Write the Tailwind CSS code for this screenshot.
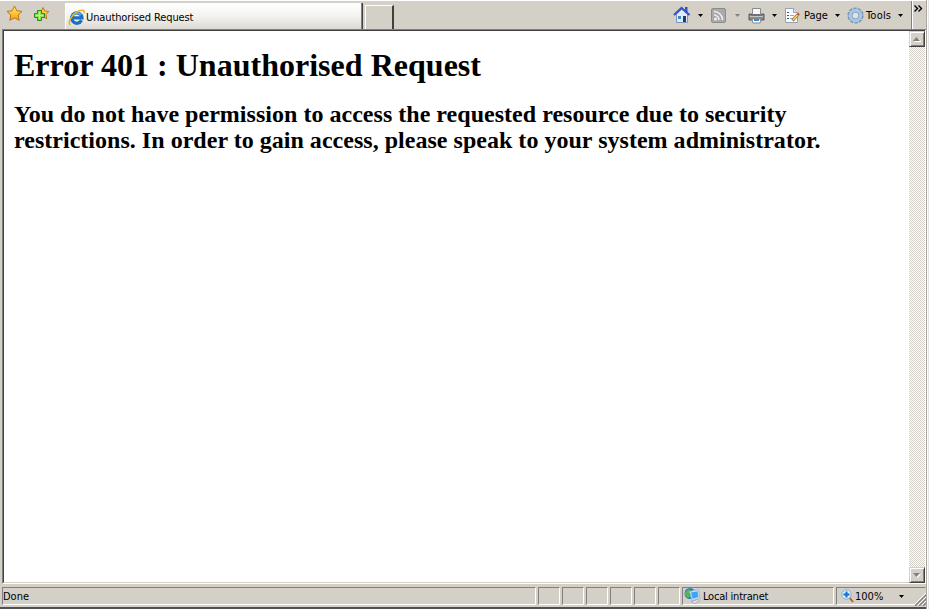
<!DOCTYPE html>
<html lang="en">
<head>
<meta charset="utf-8">
<title>Unauthorised Request</title>
<script src="https://cdn.jsdelivr.net/npm/@tailwindcss/browser@4"></script>
</head>
<body class="w-[929px] h-[609px] overflow-hidden bg-[#d4d0c8] text-black font-['DejaVu_Sans_Condensed','DejaVu_Sans',sans-serif] text-[11px] leading-[14px] flex">
<div class="w-[927px] h-[609px] flex flex-col border-r border-[#aaa69f]">
  <header class="h-[29px] border-t border-white flex items-start shrink-0">
    <svg class="ml-[6px] mt-[4px] shrink-0" width="17" height="17" viewBox="0 0 17 17"><defs><linearGradient id="g" x2="0" y2="1"><stop stop-color="#fff2a0"/><stop offset=".5" stop-color="#ffc633"/><stop offset="1" stop-color="#f49b20"/></linearGradient></defs><path d="M8.500 1 10.800 5.800 16 6.400 12.200 10 13.200 15.300 8.500 12.900 3.800 15.300 4.800 10 1 6.400 6.200 5.800Z" fill="url(#g)" stroke="#bd750f" stroke-linejoin="round"/></svg>
    <svg class="ml-[10px] mt-[5px] shrink-0" width="17" height="16" viewBox="0 0 17 16"><path d="M10 1.500 11.800 5 15.800 5.500 13 8.500 13.800 12.800 10 10.700 6.200 12.800 7 8.500 4 5.500 8.200 5Z" fill="#ffc83f" stroke="#c47b17" stroke-linejoin="round"/><path d="M4.500 4.500h4v3h3v4h-3v3h-4v-3h-3v-4h3Z" fill="#8de052" stroke="#278b1c"/><path d="M6.500 6v7M3 9.500h7" stroke="#c5f79a"/></svg>
    <div class="ml-[15px] mt-[2px] h-[26px] w-[296px] shrink-0 bg-linear-to-b from-white via-[#f3f2ef] to-[#dcd9d2] border-l border-t border-white flex items-center pl-[2px] pt-[2px]">
      <svg class="shrink-0 -mt-px" width="18" height="17" viewBox="0 0 18 17"><path d="M13.500 11.300A5.200 5.200 0 1 1 14 8.800H5" fill="none" stroke="#1b70c0" stroke-width="3.200"/><path d="M4.200 7.200A5 5 0 0 1 13 6" fill="none" stroke="#4cb7ee" stroke-width="1.600"/><path d="M2.600 15.800C-1 14.500 3 7 8 3.600 12.500.600 17.500 0 16 4.500" fill="none" stroke="#f2ad22" stroke-width="1.500"/></svg>
      <span class="whitespace-nowrap tracking-[-0.12px]">Unauthorised Request</span>
    </div>
    <div class="mt-[2px] h-[26px] w-[2px] bg-[#404040] border-l border-[#808080] shrink-0"></div>
    <div class="ml-[2px] mt-[4px] h-[24px] w-[29px] shrink-0 border-l border-t border-l-white border-t-white border-r-2 border-r-[#404040]"></div>
    <div class="ml-auto flex h-[28px] items-center shrink-0">
      <svg width="18" height="18" viewBox="0 0 18 18"><path d="M3.500 8v8.500h11V8L9 3Z" fill="#dfeafa" stroke="#7d96bd"/><path d="M12 1h2.500v5H12z" fill="#3655c5"/><path d="M1 9 8.500 2 16.500 9" fill="none" stroke="#3655c5" stroke-width="2.200"/><path d="M5 10h3v3H5z" fill="#4783ca"/><path d="M10 10h3v6h-3z" fill="#263b62"/></svg>
      <svg class="ml-[7px]" width="5" height="3"><path d="M0 0h5L2.500 3Z"/></svg>
      <svg class="ml-[8px]" width="15" height="15" viewBox="0 0 15 15"><rect x=".5" y=".5" width="14" height="14" rx="1.500" fill="#aaa" stroke="#8b8b8b"/><circle cx="4.500" cy="11" r="1.500" fill="#eee"/><path d="M3 7a5 5 0 0 1 5 5M3 3.500a8.500 8.500 0 0 1 8.500 8.500" fill="none" stroke="#eee" stroke-width="1.600"/></svg>
      <svg class="ml-[9px]" width="5" height="3"><path d="M0 0h5L2.500 3Z" fill="#808080"/></svg>
      <svg class="ml-[8px]" width="17" height="17" viewBox="0 0 17 17"><path d="M4.500 1.500h8v6h-8z" fill="#f7f7f7" stroke="#8b8b8b"/><path d="M1 7h2.500v1h10V7H16v6H1Z" fill="#888" stroke="#5b5b5b"/><path d="M2 9.500h13" stroke="#c5c5c5"/><path d="M4 12h9l-1 4H5Z" fill="#fff" stroke="#888"/><path d="M6 12h5v2H6z" fill="#368bd6"/></svg>
      <svg class="ml-[7px]" width="5" height="3"><path d="M0 0h5L2.500 3Z"/></svg>
      <svg class="ml-[7px]" width="17" height="17" viewBox="0 0 17 17"><path d="M1.500 1.500h8l4 4v10h-12z" fill="#f7fafe" stroke="#94a3b3"/><path d="M9.500 1.500v4h4" fill="#d8e3ee" stroke="#94a3b3"/><path d="M3 5.500h2M3 8.500h2M3 11.500h2" stroke="#555"/><path d="M6 8.500h4M6 11.500h3" stroke="#83b0da"/><path d="m8.500 13.500 5.500-6" stroke="#a66c23" stroke-width="3"/><path d="m9 13 4.500-5" stroke="#ffd354" stroke-width="1.500"/><path d="m14 7.500 1-1" stroke="#d34d46" stroke-width="2.500"/></svg>
      <span class="ml-[3px] mt-px w-[25px] whitespace-nowrap">Page</span>
      <svg class="ml-[6px]" width="5" height="3"><path d="M0 0h5L2.500 3Z"/></svg>
      <svg class="ml-[7px]" width="17" height="17" viewBox="0 0 17 17"><circle cx="8.500" cy="8.500" r="7.200" fill="none" stroke="#7593b7" stroke-width="1.800" stroke-dasharray="3.200 1.324"/><circle cx="8.500" cy="8.500" r="5" fill="none" stroke="#7f9fc4" stroke-width="4.200"/><circle cx="8.500" cy="8.500" r="5.200" fill="none" stroke="#a9c6e5" stroke-width="3"/><circle cx="8.500" cy="8.500" r="2.600" fill="#e4e3df"/></svg>
      <span class="ml-[2px] mt-px w-[27px] whitespace-nowrap tracking-[0.2px]">Tools</span>
      <svg class="ml-[5px]" width="5" height="3"><path d="M0 0h5L2.500 3Z"/></svg>
      <div class="ml-[8px] h-[28px] w-[15px] border-l border-[#808080] shadow-[inset_1px_0_#fff] pt-[4px] pl-[2px]"><svg width="9" height="7" viewBox="0 0 9 7"><path d="m.5.500 3 3-3 3M4.500.500l3 3-3 3" fill="none" stroke="#000" stroke-width="1.400"/></svg></div>
    </div>
  </header>
  <main class="h-[555px] shrink-0 ml-[2px] bg-white border-t border-l border-t-[#808080] border-l-[#808080] border-b border-b-white flex">
    <div class="w-[906px] border-t border-l border-[#404040] border-b border-b-[#d4d0c8] pl-[10px] font-['Liberation_Serif',serif] font-bold">
      <h1 class="mt-[16px] text-[32px] leading-[37px] whitespace-nowrap tracking-[0.02px]">Error 401 : Unauthorised Request</h1>
      <h2 class="mt-[17px] text-[24px] leading-[26px] whitespace-nowrap tracking-[0.025px]">You do not have permission to access the requested resource due to security<br>restrictions. In order to gain access, please speak to your system administrator.</h2>
    </div>
    <div class="w-[16px] h-[553px] border-t border-t-[#404040] flex flex-col justify-between bg-[repeating-conic-gradient(#fff_0_25%,#d4d0c8_0_50%)] bg-[length:2px_2px]">
      <div class="h-[16px] bg-[#d4d0c8] border border-[#d4d0c8] border-r-[#404040] border-b-[#404040] shadow-[inset_1px_1px_#fff,inset_-1px_-1px_#808080] flex items-center justify-center"><svg width="8" height="5"><path d="M1 5h7v-1L4.500 1Z" fill="#fff"/><path d="M0 4h7L3.500 0Z" fill="#808080"/></svg></div>
      <div class="h-[16px] bg-[#d4d0c8] border border-[#d4d0c8] border-r-[#404040] border-b-[#404040] shadow-[inset_1px_1px_#fff,inset_-1px_-1px_#808080] flex items-center justify-center"><svg width="8" height="5"><path d="M1 1h7L4.500 5Z" fill="#fff"/><path d="M0 0h7L3.500 4Z" fill="#808080"/></svg></div>
    </div>
    <div class="w-px bg-white"></div>
  </main>
  <footer class="h-[25px] shrink-0 flex items-start pt-[3px] pl-[2px] border-b-2 border-b-[#505050] relative">
    <div class="h-[18px] w-[534px] border border-[#808080] border-r-white border-b-white pt-px flex items-center"><span>Done</span></div>
    <div class="flex gap-[2px] ml-[2px]">
      <div class="h-[18px] w-[22px] border border-[#808080] border-r-white border-b-white"></div>
      <div class="h-[18px] w-[22px] border border-[#808080] border-r-white border-b-white"></div>
      <div class="h-[18px] w-[22px] border border-[#808080] border-r-white border-b-white"></div>
      <div class="h-[18px] w-[22px] border border-[#808080] border-r-white border-b-white"></div>
      <div class="h-[18px] w-[22px] border border-[#808080] border-r-white border-b-white"></div>
      <div class="h-[18px] w-[22px] border border-[#808080] border-r-white border-b-white"></div>
    </div>
    <div class="ml-[2px] h-[18px] w-[152px] border border-[#808080] border-r-white border-b-white flex items-center pl-px">
      <svg class="shrink-0" width="17" height="16" viewBox="0 0 17 16"><circle cx="6" cy="5.500" r="5.500" fill="#2676c7"/><path d="M1 4 5 1l2 2-2 2 1 4-2 1-3-3Z" fill="#55b849"/><path d="m5.500 3.500 9-2 1.500 9-8 2Z" fill="#d5e9fb" stroke="#9db9d8"/><path d="m7 4.500 6.500-1.300 1 6-6 1.500Z" fill="#3da5f3"/><path d="m7 13.500 7-2 1.500 1.500-5 2.500Z" fill="#e5e5e5" stroke="#999" stroke-width=".7"/></svg>
      <span class="ml-[2px] mt-px whitespace-nowrap tracking-[-0.2px]">Local intranet</span>
    </div>
    <div class="ml-[2px] h-[18px] w-[90px] border border-[#808080] border-r-transparent border-b-white flex items-center pl-[4px]">
      <svg class="shrink-0" width="13" height="14" viewBox="0 0 13 14"><path d="m8 8 4 5" stroke="#a56a35" stroke-width="2"/><circle cx="5.500" cy="5.500" r="4.700" fill="#d9f2ff" stroke="#86aacd"/><path d="M5.500 2.500v6M2.500 5.500h6" stroke="#1969c9" stroke-width="2"/></svg>
      <span class="ml-[1px] mt-px w-[29px] whitespace-nowrap">100%</span>
      <svg class="ml-[15px]" width="5" height="3"><path d="M0 0h5L2.500 3Z"/></svg>
    </div>
    <svg class="absolute right-0 bottom-[1px] bg-[#d4d0c8]" width="12" height="13" viewBox="0 0 12 13"><path d="M0 12 12 0M4 12 12 4M8 12 12 8" stroke="#fff"/><path d="M1 13 13 1M5 13 13 5M9 13 13 9" stroke="#808080" stroke-width="1.400"/></svg>
  </footer>
</div>
<div class="w-[2px] h-[609px] bg-[#e8e6e2] border-l border-white"></div>
</body>
</html>
